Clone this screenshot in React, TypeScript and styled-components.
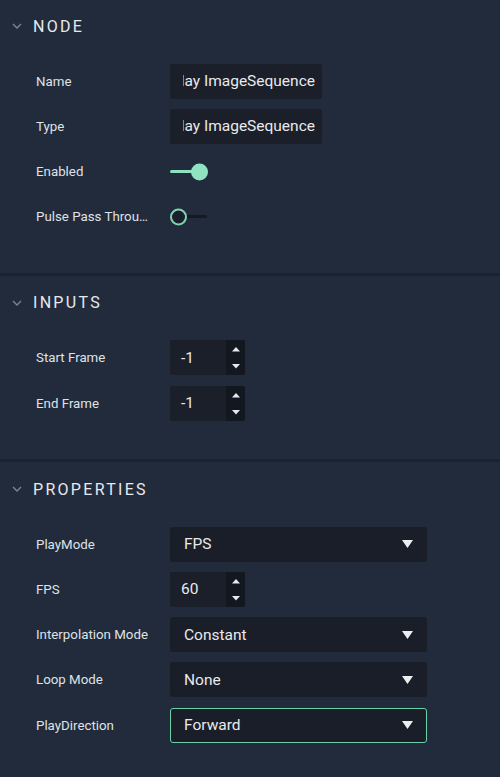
import React from 'react'
import styled, { createGlobalStyle } from 'styled-components'

const GlobalStyle = createGlobalStyle`
	html, body {
		margin: 0;
		padding: 0;
		background: #222b3b;
	}
	body {
		font-family: Roboto, 'Liberation Sans', sans-serif;
		color: #e4e7eb;
	}
`

const Panel = styled.div`
	width: 500px;
	min-height: 777px;
	background: #222b3b;
`

const Section = styled.section<{ first?: boolean }>`
	padding-top: ${({ first }) => (first ? '0' : '1px')};
	padding-bottom: 38.5px;
	border-top: ${({ first }) => (first ? 'none' : '3px solid #1b2230')};
`

const Header = styled.div`
	height: 52px;
	display: flex;
	align-items: center;
	padding-left: 12px;
	gap: 11px;
`

const HeaderTitle = styled.h2`
	margin: 0;
	font-size: 16px;
	font-weight: 400;
	letter-spacing: 2.3px;
	text-transform: uppercase;
	color: #e6e9ed;
`

const Rows = styled.div`
	display: flex;
	flex-direction: column;
	gap: 10.25px;
	padding-top: 11.5px;
`

const Row = styled.div`
	display: flex;
	align-items: center;
	height: 35px;
	padding-left: 36px;
	gap: 20px;
`

const Label = styled.span`
	width: 114px;
	flex: none;
	font-size: 13.3px;
	color: #dfe2e7;
	white-space: nowrap;
	overflow: hidden;
	text-overflow: ellipsis;
`

const TextBox = styled.div`
	width: 152px;
	height: 35px;
	box-sizing: border-box;
	background: #1b1f29;
	border-radius: 2px;
	padding: 0 7px 0 12.5px;
	display: flex;
	align-items: center;
`

const Clip = styled.div`
	flex: 1;
	display: flex;
	justify-content: flex-end;
	overflow: hidden;
	white-space: nowrap;
	font-size: 15.5px;
	color: #e8eaee;
`

const Toggle = styled.div`
	position: relative;
	width: 38px;
	height: 20px;
	display: flex;
	align-items: center;
`

const Track = styled.div<{ on?: boolean }>`
	height: 3px;
	width: ${({ on }) => (on ? '30px' : '37px')};
	background: ${({ on }) => (on ? '#8fe0c1' : '#151920')};
	border-radius: 2px;
`

const Knob = styled.div<{ on?: boolean }>`
	position: absolute;
	top: 50%;
	left: ${({ on }) => (on ? '21px' : '0px')};
	width: 17px;
	height: 17px;
	box-sizing: border-box;
	border-radius: 50%;
	transform: translateY(-50%);
	background: ${({ on }) => (on ? '#8fe3c3' : '#1b1f29')};
	border: ${({ on }) => (on ? 'none' : '2.5px solid #7fd3b2')};
`

const NumberBox = styled.div`
	width: 75px;
	height: 35px;
	display: flex;
	background: #1b1f29;
	border-radius: 2px;
	overflow: hidden;
`

const NumberValue = styled.div`
	flex: 1;
	display: flex;
	align-items: center;
	padding-left: 11px;
	font-size: 15.5px;
	color: #e8eaee;
`

const Spinner = styled.div`
	width: 19px;
	background: #131720;
	display: flex;
	flex-direction: column;
	align-items: center;
	justify-content: space-between;
	padding: 7px 0 6px;
	box-sizing: border-box;
`

const Select = styled.div<{ focused?: boolean }>`
	width: 257px;
	height: 35px;
	box-sizing: border-box;
	background: #1a1e28;
	border-radius: 3px;
	border: 1px solid ${({ focused }) => (focused ? '#6cd0a8' : 'transparent')};
	display: flex;
	align-items: center;
	justify-content: space-between;
	padding: 0 13px;
	font-size: 15.5px;
	color: #e8eaee;
`

const Chevron = () => (
	<svg width="10" height="6" viewBox="0 0 10 6">
		<path d="M1 1 L5 5 L9 1" fill="none" stroke="#7d8694" strokeWidth="1.3" />
	</svg>
)

const Caret = () => (
	<svg width="11" height="8" viewBox="0 0 11 8">
		<path d="M0 0 H11 L5.5 8 Z" fill="#eceef1" />
	</svg>
)

const Arrow = ({ down }: { down?: boolean }) => (
	<svg width="8" height="5" viewBox="0 0 8 5">
		<path d={down ? 'M0 0 H8 L4 4.5 Z' : 'M0 4.5 H8 L4 0 Z'} fill="#e6e8ec" />
	</svg>
)

const NumberInput = ({ value }: { value: string }) => (
	<NumberBox>
		<NumberValue>{value}</NumberValue>
		<Spinner>
			<Arrow />
			<Arrow down />
		</Spinner>
	</NumberBox>
)

const SectionHeader = ({ title }: { title: string }) => (
	<Header>
		<Chevron />
		<HeaderTitle>{title}</HeaderTitle>
	</Header>
)

export default function App() {
	return (
		<Panel>
			<GlobalStyle />
			<Section first>
				<SectionHeader title="Node" />
				<Rows>
					<Row>
						<Label>Name</Label>
						<TextBox>
							<Clip>Play ImageSequence</Clip>
						</TextBox>
					</Row>
					<Row>
						<Label>Type</Label>
						<TextBox>
							<Clip>Play ImageSequence</Clip>
						</TextBox>
					</Row>
					<Row>
						<Label>Enabled</Label>
						<Toggle>
							<Track on />
							<Knob on />
						</Toggle>
					</Row>
					<Row>
						<Label>Pulse Pass Through</Label>
						<Toggle>
							<Track />
							<Knob />
						</Toggle>
					</Row>
				</Rows>
			</Section>
			<Section>
				<SectionHeader title="Inputs" />
				<Rows>
					<Row>
						<Label>Start Frame</Label>
						<NumberInput value="-1" />
					</Row>
					<Row>
						<Label>End Frame</Label>
						<NumberInput value="-1" />
					</Row>
				</Rows>
			</Section>
			<Section>
				<SectionHeader title="Properties" />
				<Rows>
					<Row>
						<Label>PlayMode</Label>
						<Select>
							FPS
							<Caret />
						</Select>
					</Row>
					<Row>
						<Label>FPS</Label>
						<NumberInput value="60" />
					</Row>
					<Row>
						<Label>Interpolation Mode</Label>
						<Select>
							Constant
							<Caret />
						</Select>
					</Row>
					<Row>
						<Label>Loop Mode</Label>
						<Select>
							None
							<Caret />
						</Select>
					</Row>
					<Row>
						<Label>PlayDirection</Label>
						<Select focused>
							Forward
							<Caret />
						</Select>
					</Row>
				</Rows>
			</Section>
		</Panel>
	)
}
